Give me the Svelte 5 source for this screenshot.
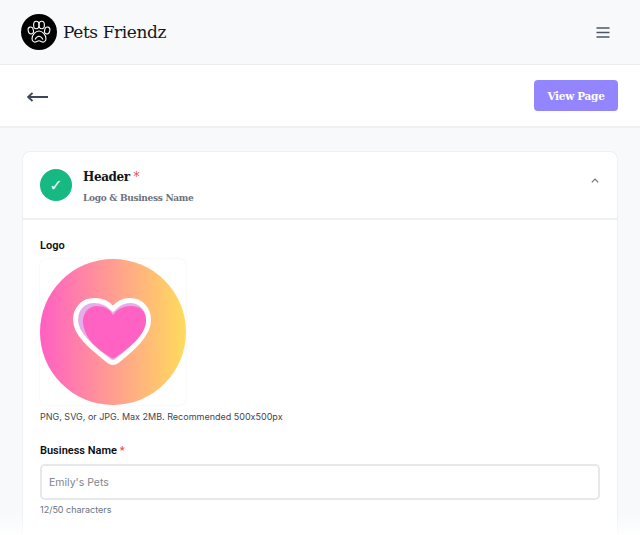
<script lang="ts">
  let businessName = "Emily's Pets";
  const maxName = 50;
</script>

<div class="page">
  <header class="topbar">
    <div class="brand">
      <span class="brand-mark">
        <svg viewBox="0 0 36 36" fill="none" stroke="#fff" stroke-width="1.1">
          <ellipse cx="9.800" cy="16.500" rx="2.600" ry="3.500" transform="rotate(-14 9.800 16.500)" />
          <ellipse cx="15.300" cy="11" rx="2.700" ry="3.800" />
          <ellipse cx="20.700" cy="11" rx="2.700" ry="3.800" />
          <ellipse cx="26.200" cy="16.500" rx="2.600" ry="3.500" transform="rotate(14 26.200 16.500)" />
          <path d="M18 17c-3.200 0-7 3.800-7 7.800 0 2.800 2.600 3.800 4.200 3 1-.5 1.800-1.100 2.800-1.100s1.800.6 2.800 1.100c1.600.8 4.200-.2 4.200-3 0-4-3.800-7.800-7-7.800z" />
          <path d="M14 25.500c1.200-2.200 2.600-3.300 4-3.300s2.800 1.100 4 3.300" />
        </svg>
      </span>
      <span class="brand-name">Pets Friendz</span>
    </div>
    <button class="icon-btn" type="button" aria-label="Menu">
      <svg viewBox="0 0 14 11" width="14" height="11" stroke="#4b5563" stroke-width="1.500" fill="none">
        <line x1="0.500" y1="1" x2="13.500" y2="1" />
        <line x1="0.500" y1="5.500" x2="13.500" y2="5.500" />
        <line x1="0.500" y1="10" x2="13.500" y2="10" />
      </svg>
    </button>
  </header>

  <div class="toolbar">
    <button class="icon-btn back-btn" type="button" aria-label="Back">
      <svg viewBox="0 0 21 10" width="21" height="10" stroke="#3f4654" stroke-width="1.800" fill="none">
        <path d="M1 5h20M5.500 1 1 5l4.500 4" />
      </svg>
    </button>
    <button class="view-btn" type="button">View Page</button>
  </div>

  <main class="content">
    <section class="card">
      <div class="card-head">
        <span class="status">✓</span>
        <div class="card-titles">
          <h2>Header <span class="req">*</span></h2>
          <p>Logo &amp; Business Name</p>
        </div>
        <svg class="chevron" viewBox="0 0 8 5" width="8" height="5" stroke="#6b7280" stroke-width="1.200" fill="none">
          <path d="M.8 4.300 4 1l3.200 3.300" />
        </svg>
      </div>

      <div class="card-body">
        <div class="label">Logo</div>
        <div class="logo-box">
          <svg viewBox="0 0 146 146" width="146" height="146">
            <defs>
              <linearGradient id="logoFill" x1="0" y1="0" x2="1" y2="0">
                <stop offset="0" stop-color="#ff5fc4" />
                <stop offset="1" stop-color="#ffdc5c" />
              </linearGradient>
            </defs>
            <circle cx="73" cy="73" r="73" fill="url(#logoFill)" />
            <path d="M73 50C78 44 84 41.500 90 41.500C101 41.500 108.500 50 108.500 61C108.500 76 92 90 77 102Q73 105 69 102C54 90 35.500 76 35.500 61C35.500 50 43 41.500 54 41.500C61 41.500 68 44 73 50Z" fill="#e4aeea" stroke="#fff" stroke-width="5" stroke-linejoin="round" />
            <path d="M73 56C77 50 84 47 91 47C100 47 106 52 106 61C106 76 90 88 76 98Q73 100.500 70 98C62 92 47 85 43 65C42 55 48 47 57 47C64 47 70 50 73 56Z" fill="#ff62c2" />
          </svg>
        </div>
        <p class="hint">PNG, SVG, or JPG. Max 2MB. Recommended 500x500px</p>

        <label class="label name-label" for="business-name">Business Name <span class="req">*</span></label>
        <input id="business-name" class="text-input" type="text" bind:value={businessName} />
        <p class="count">{businessName.length}/{maxName} characters</p>
      </div>
    </section>
  </main>

  <div class="fade"></div>
</div>

<style>
  :global(body) {
    margin: 0;
    background: #f8f9fb;
  }

  .page {
    position: relative;
    height: 535px;
    overflow: hidden;
    background: #f8f9fb;
    font-family: Inter, "Liberation Sans", sans-serif;
    font-feature-settings: "calt" 0;
  }

  .topbar {
    display: flex;
    align-items: center;
    justify-content: space-between;
    height: 64px;
    padding: 0 30px 0 21px;
    border-bottom: 1px solid #eceef1;
  }

  .brand {
    display: flex;
    align-items: center;
    gap: 6px;
  }

  .brand-mark {
    display: flex;
    width: 36px;
    height: 36px;
    border-radius: 50%;
    background: #000;
  }

  .brand-name {
    font-family: "DejaVu Serif", serif;
    font-size: 17px;
    letter-spacing: -0.4px;
    color: #14171c;
  }

  .icon-btn {
    display: flex;
    padding: 0;
    border: none;
    background: none;
  }

  .back-btn {
    margin-top: 3px;
  }

  .toolbar {
    display: flex;
    align-items: center;
    justify-content: space-between;
    height: 61px;
    padding: 0 22px 0 27px;
    background: #fff;
    border-bottom: 2px solid #eff0f2;
  }

  .view-btn {
    width: 84px;
    height: 31px;
    padding: 0;
    border: none;
    border-radius: 4px;
    background: #9285fe;
    color: #fff;
    font-family: "DejaVu Serif", serif;
    font-size: 10.500px;
    font-weight: 700;
    letter-spacing: -0.3px;
  }

  .content {
    padding: 23px 22px 0;
  }

  .card {
    background: #fff;
    border: 1px solid #eeeff2;
    border-radius: 8px;
  }

  .card-head {
    display: flex;
    align-items: center;
    gap: 11px;
    height: 66px;
    padding: 0 18px 0 17px;
    border-bottom: 2px solid #eff0f2;
  }

  .status {
    display: flex;
    align-items: center;
    justify-content: center;
    width: 32px;
    height: 32px;
    border-radius: 50%;
    background: #15b981;
    color: #fff;
    font-family: "DejaVu Sans", sans-serif;
    font-size: 16px;
    font-weight: 700;
  }

  .card-titles {
    flex: 1;
    margin-top: 4px;
  }

  .card-titles h2 {
    margin: 0 0 5px;
    font-family: "DejaVu Serif", serif;
    font-size: 12px;
    font-weight: 700;
    line-height: 17px;
    letter-spacing: -0.4px;
    color: #111418;
  }

  .card-titles p {
    margin: 0;
    font-family: "DejaVu Serif", serif;
    font-size: 9px;
    font-weight: 700;
    line-height: 14px;
    letter-spacing: -0.3px;
    color: #6b7280;
  }

  .req {
    color: #ef4a4f;
    font-weight: 500;
  }

  .chevron {
    margin-bottom: 10px;
  }

  .card-body {
    padding: 19px 17px 60px;
  }

  .label {
    display: block;
    font-family: Roboto, sans-serif;
    font-size: 11px;
    font-weight: 600;
    line-height: 14px;
    color: #0c0e12;
  }

  .logo-box {
    width: 146px;
    height: 146px;
    margin-top: 6px;
    border-radius: 6px;
    box-shadow: 0 0 2px rgba(20, 24, 40, 0.08);
  }

  .logo-box svg {
    display: block;
  }

  .hint {
    margin: 5px 0 0;
    font-size: 9px;
    line-height: 13px;
    color: #3f4552;
  }

  .name-label {
    margin-top: 21px;
  }

  .text-input {
    display: block;
    box-sizing: border-box;
    width: 100%;
    height: 36px;
    margin-top: 6px;
    padding: 0 7px;
    border: 2px solid #e5e7eb;
    border-radius: 5px;
    background: #fff;
    font-family: Inter, sans-serif;
    font-size: 10.500px;
    color: #80858f;
    outline: none;
  }

  .count {
    margin: 3px 0 0;
    font-size: 9px;
    line-height: 13px;
    color: #6b7280;
  }

  .fade {
    position: absolute;
    left: 0;
    right: 0;
    bottom: 0;
    height: 24px;
    background: linear-gradient(to bottom, rgba(255, 255, 255, 0), rgba(255, 255, 255, 0.85));
    pointer-events: none;
  }
</style>
